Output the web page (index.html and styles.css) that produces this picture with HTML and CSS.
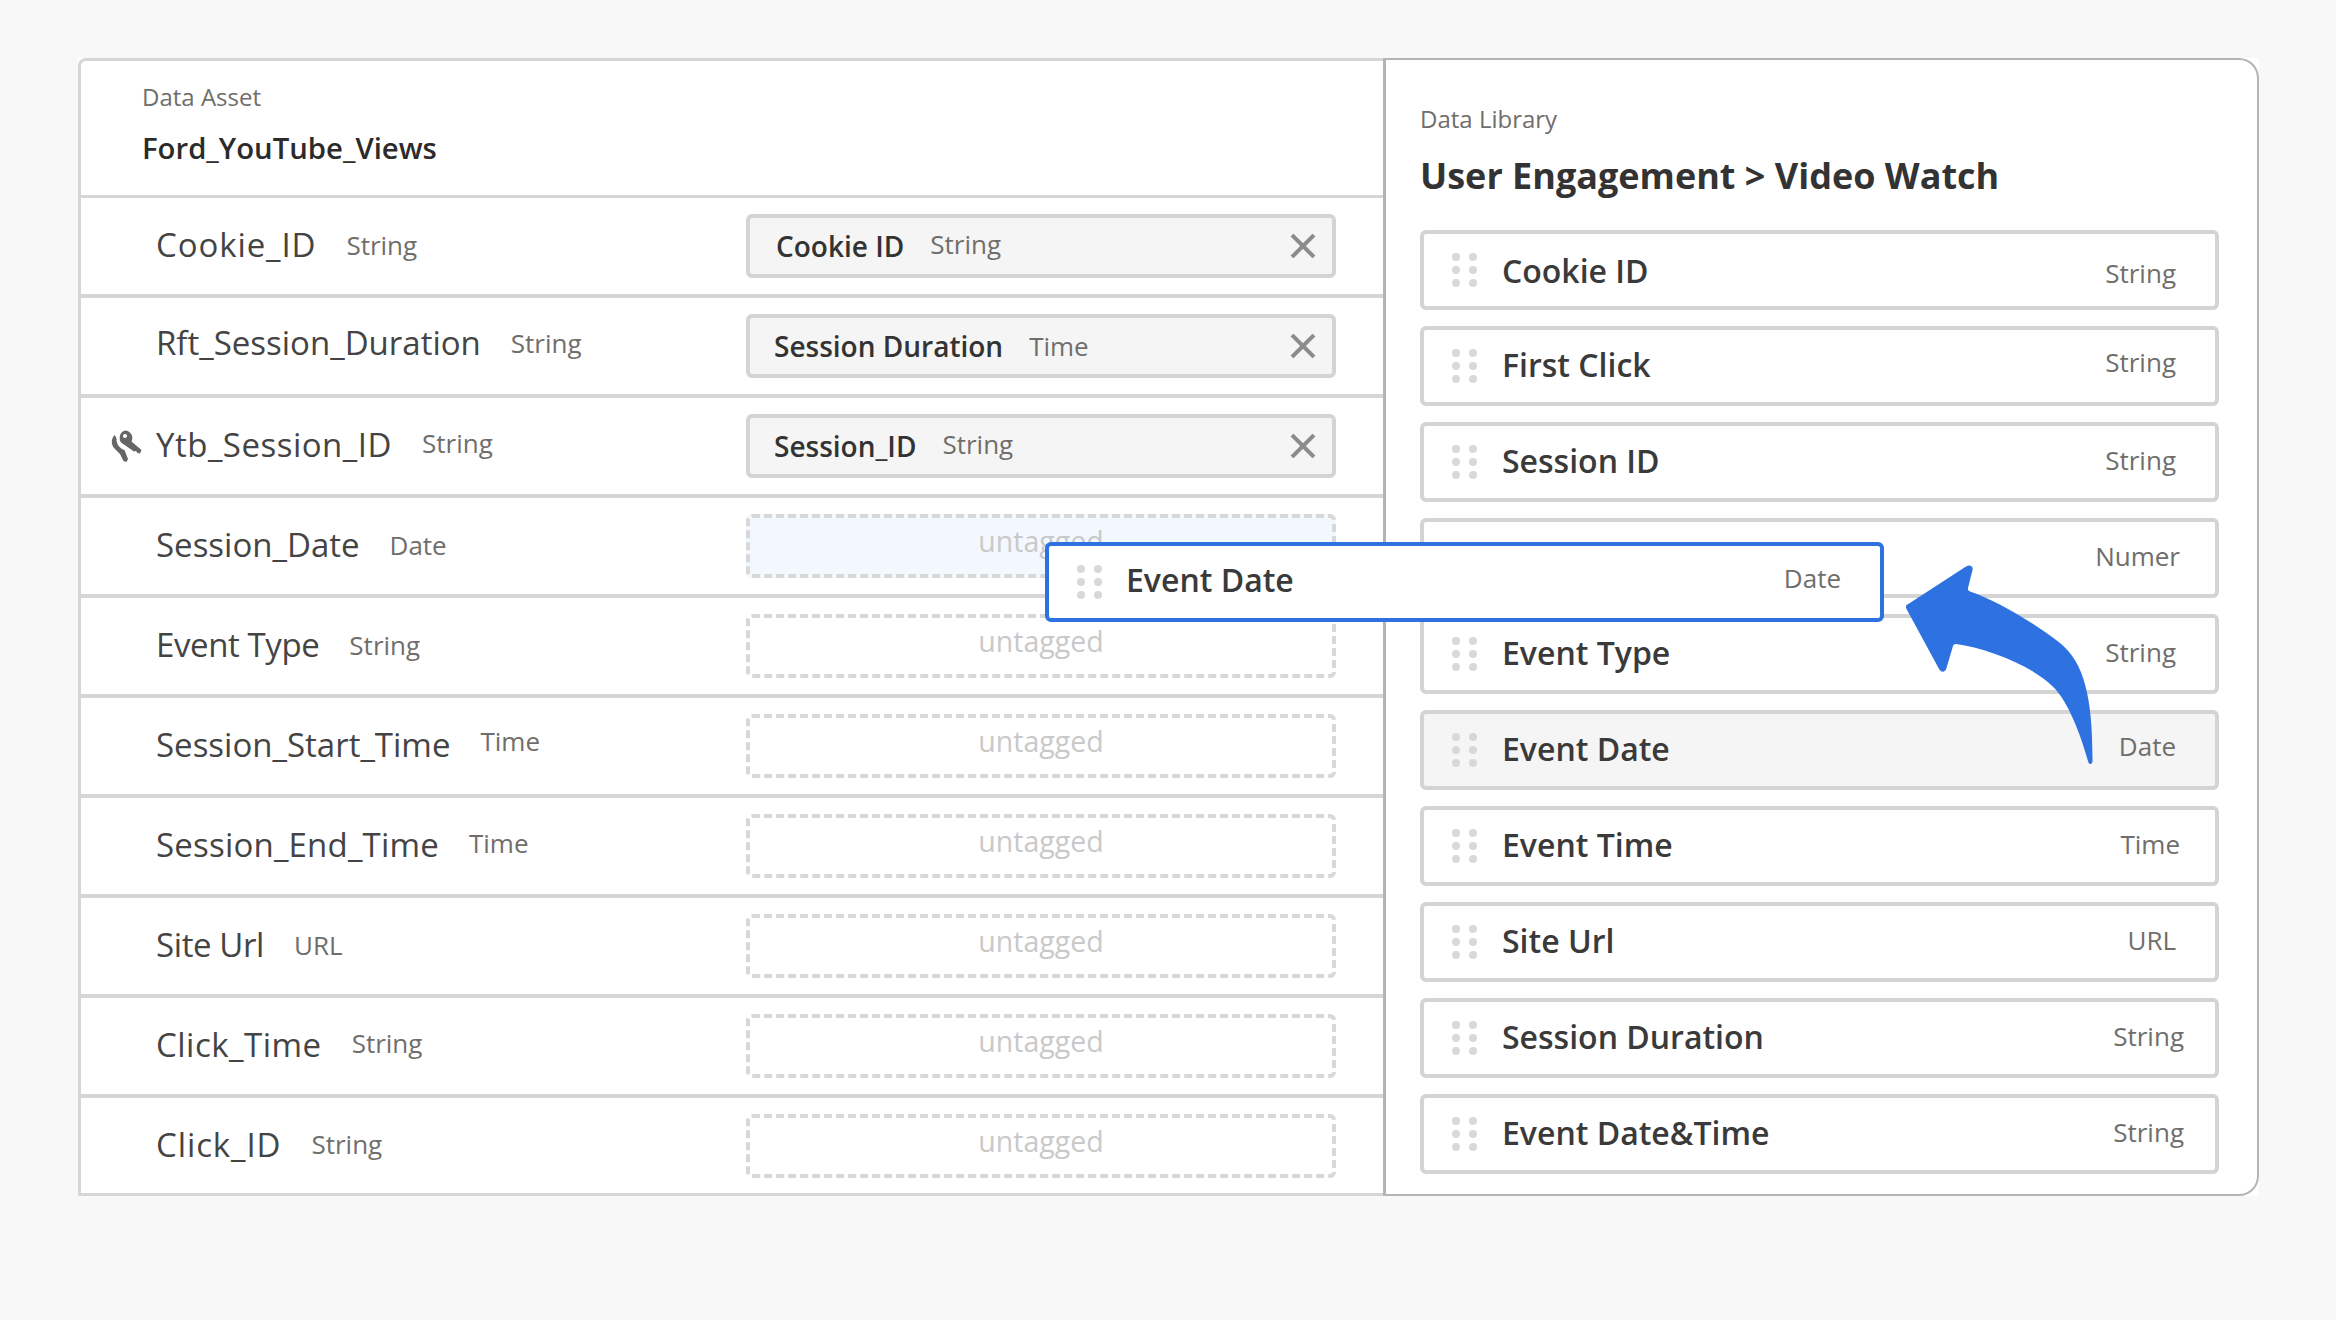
FILE: index.html
```html
<!DOCTYPE html>
<html lang="en">
  <head>
    <meta charset="UTF-8" />
    <title>Data Asset Tagging</title>
    <link rel="stylesheet" href="styles.css">
  </head>
  <body>
    <div class="board">
      <section class="asset">
        <header class="asset-head">
          <div class="eyebrow">Data Asset</div>
          <div class="asset-name">Ford_YouTube_Views</div>
        </header>

        <div class="row">
          <span class="key-slot"></span><span class="field field-wider">Cookie_ID</span><span class="type">String</span>
          <div class="chip"><b class="chip-name chip-name-in">Cookie ID</b><span class="type chip-type nudge-up">String</span>
            <svg class="close" viewBox="0 0 26 24"><path d="M2 1 L24 23 M24 1 L2 23" /></svg>
          </div>
        </div>
        <div class="row">
          <span class="key-slot"></span><span class="field nudge-up">Rft_Session_Duration</span><span class="type nudge-up">String</span>
          <div class="chip"><b class="chip-name">Session Duration</b><span class="type chip-type">Time</span>
            <svg class="close" viewBox="0 0 26 24"><path d="M2 1 L24 23 M24 1 L2 23" /></svg>
          </div>
        </div>
        <div class="row">
          <span class="key-slot">
            <svg class="key" viewBox="0 0 32 32">
              <path d="M14 0.500 a7.500 7.500 0 0 1 6.500 11 L30.500 20 L29 23.500 L26.500 23 L25 21 L23 21.500 L13 14.500 a7.500 7.500 0 0 1 1 -14 Z M14 4 a2 2 0 1 0 0.010 0 Z" fill-rule="evenodd" />
              <path d="M3.500 5 C0 9 0 14 3 18 L9 24 L12.500 31 L15.500 32 L17 29 L13.500 20 C9 19 5 14 5.500 8 Z" />
            </svg>
          </span><span class="field field-wide">Ytb_Session_ID</span><span class="type nudge-up">String</span>
          <div class="chip"><b class="chip-name">Session_ID</b><span class="type chip-type nudge-up">String</span>
            <svg class="close" viewBox="0 0 26 24"><path d="M2 1 L24 23 M24 1 L2 23" /></svg>
          </div>
        </div>
        <div class="row">
          <span class="key-slot"></span><span class="field">Session_Date</span><span class="type">Date</span>
          <div class="slot slot-active">untagged</div>
        </div>
        <div class="row">
          <span class="key-slot"></span><span class="field field-tight">Event Type</span><span class="type">String</span>
          <div class="slot">untagged</div>
        </div>
        <div class="row">
          <span class="key-slot"></span><span class="field">Session_Start_Time</span><span class="type nudge-up-more">Time</span>
          <div class="slot">untagged</div>
        </div>
        <div class="row">
          <span class="key-slot"></span><span class="field field-slight">Session_End_Time</span><span class="type nudge-up">Time</span>
          <div class="slot">untagged</div>
        </div>
        <div class="row">
          <span class="key-slot"></span><span class="field field-tight">Site Url</span><span class="type">URL</span>
          <div class="slot">untagged</div>
        </div>
        <div class="row">
          <span class="key-slot"></span><span class="field field-wide">Click_Time</span><span class="type nudge-up">String</span>
          <div class="slot">untagged</div>
        </div>
        <div class="row row-last">
          <span class="key-slot"></span><span class="field field-wider">Click_ID</span><span class="type">String</span>
          <div class="slot">untagged</div>
        </div>
      </section>

      <section class="library">
        <div class="eyebrow">Data Library</div>
        <h1 class="library-title">User Engagement &gt; Video Watch</h1>
        <div class="items">
          <div class="item"><span class="grip"><i></i><i></i><i></i><i></i><i></i><i></i></span><span class="item-name item-name-low">Cookie ID</span><span class="type nudge-down">String</span></div>
          <div class="item"><span class="grip"><i></i><i></i><i></i><i></i><i></i><i></i></span><span class="item-name">First Click</span><span class="type nudge-up">String</span></div>
          <div class="item"><span class="grip"><i></i><i></i><i></i><i></i><i></i><i></i></span><span class="item-name">Session ID</span><span class="type">String</span></div>
          <!-- name and grip of this one are covered by the drag card -->
          <div class="item"><span class="item-name"></span><span class="type type-wide">Numer</span></div>
          <div class="item"><span class="grip"><i></i><i></i><i></i><i></i><i></i><i></i></span><span class="item-name">Event Type</span><span class="type">String</span></div>
          <div class="item item-used"><span class="grip"><i></i><i></i><i></i><i></i><i></i><i></i></span><span class="item-name">Event Date</span><span class="type nudge-up">Date</span></div>
          <div class="item"><span class="grip"><i></i><i></i><i></i><i></i><i></i><i></i></span><span class="item-name">Event Time</span><span class="type type-wide">Time</span></div>
          <div class="item"><span class="grip"><i></i><i></i><i></i><i></i><i></i><i></i></span><span class="item-name">Site Url</span><span class="type">URL</span></div>
          <div class="item"><span class="grip"><i></i><i></i><i></i><i></i><i></i><i></i></span><span class="item-name">Session Duration</span><span class="type type-far">String</span></div>
          <div class="item"><span class="grip"><i></i><i></i><i></i><i></i><i></i><i></i></span><span class="item-name">Event Date&amp;Time</span><span class="type type-far">String</span></div>
        </div>
      </section>

      <!-- card being dragged, sits on top of both panels -->
      <div class="item drag-card"><span class="grip"><i></i><i></i><i></i><i></i><i></i><i></i></span><span class="item-name">Event Date</span><span class="type">Date</span></div>

      <svg class="arrow" viewBox="0 0 200 210">
        <path d="M6 45.500 L66 6.500 C70 4 73.500 6 72.500 10 L68 28 C67.700 30 68.500 31 70 31.500 C95 40 130 60 160 83 C185 103 192.700 140 192.500 201 C192.500 205 188.500 205 188 201 C178 165 165 138 153 126.700 C130 104 85 88 56 84 C54 84 53 85 52.700 87 L46.500 108 C45 113 41 113 38.500 108 L6 48 Z" />
      </svg>
    </div>
  </body>
</html>
```

FILE: styles.css
```css
body {
  font-family: "Open Sans", Arial, sans-serif;
  background-color: #f8f8f8;
  color: #3e3e3c;
  margin: 0;
  padding: 58px 0 0 78px;
}

.board {
  position: relative;
  display: flex;
  width: 2181px;
  height: 1138px;
  box-sizing: border-box;
  background-color: #fff;
}

/* left panel */
.asset {
  width: 1305px;
  box-sizing: border-box;
  border: solid #d6d6d6;
  border-width: 3px 0 3px 3px;
  border-top-left-radius: 8px;
}

.asset-head {
  height: 137px;
  box-sizing: border-box;
  padding: 20px 0 0 61px;
  border-bottom: 3px solid #d6d6d6;
}

.eyebrow {
  font-size: 24px;
  line-height: 32px;
  color: #706e6b;
}

.asset-name {
  font-size: 29.300px;
  font-weight: 600;
  line-height: 38px;
  margin-top: 16px;
  color: #2b2b2b;
}

.row {
  display: flex;
  align-items: center;
  height: 100px;
  box-sizing: border-box;
  padding: 0 47px 0 30px;
  border-bottom: 4px solid #d6d6d6;
}

.row-last {
  height: 95px;
  border-bottom: 0;
}

.key-slot {
  width: 45px;
  display: flex;
}

.key {
  width: 32px;
  height: 32px;
  fill: #666;
}

.field {
  font-size: 33px;
  margin-bottom: 3px;
  color: #444;
}

.field-slight {
  letter-spacing: 0.2px;
}

.field-wide {
  letter-spacing: 0.5px;
}

.field-wider {
  letter-spacing: 0.9px;
}

.field-tight {
  letter-spacing: -0.4px;
}

.type {
  font-size: 26px;
  color: #706e6b;
}

.row > .type {
  margin-left: 30px;
  margin-right: auto;
  margin-bottom: 3px;
}

/* the source text does not sit on one baseline */
.nudge-up {
  margin-bottom: 5px;
}

.row > .nudge-up {
  margin-bottom: 7px;
}

.row > .nudge-up-more {
  margin-bottom: 11px;
}

.chip,
.slot {
  width: 590px;
  height: 64px;
  box-sizing: border-box;
  border-radius: 6px;
}

.chip {
  display: flex;
  align-items: center;
  padding: 0 16px 0 24px;
  background-color: #f5f5f5;
  border: 4px solid #d4d4d4;
}

.chip-name {
  font-size: 28px;
  font-weight: 600;
  color: #333;
}

.chip-name-in {
  margin-left: 2px;
}

.chip-type {
  margin-left: 26px;
}

.close {
  width: 26px;
  height: 24px;
  margin-left: auto;
  fill: none;
  stroke: #8c8c8c;
  stroke-width: 4;
}

.slot {
  border: 4px dashed #d8d8d8;
  text-align: center;
  font-size: 28.500px;
  line-height: 47px;
  color: #c9c9c9;
}

.slot-active {
  background-color: #f3f8fe;
}

/* right panel */
.library {
  flex: 1;
  box-sizing: border-box;
  padding: 43px 38px 0 34px;
  border: 2px solid #b4b4b4;
  border-left-width: 3px;
  border-radius: 0 20px 20px 0;
}

.library-title {
  font-size: 36px;
  font-weight: 700;
  line-height: 50px;
  margin: 16px 0 29px;
  color: #333;
}

.items {
  display: flex;
  flex-direction: column;
  gap: 16px;
}

.item {
  display: flex;
  align-items: center;
  height: 80px;
  box-sizing: border-box;
  padding: 0 39px 0 28px;
  background-color: #fff;
  border: 4px solid #d4d4d4;
  border-radius: 6px;
}

.item-used {
  background-color: #f5f5f5;
}

.item-name {
  font-size: 32px;
  font-weight: 600;
  margin: 0 auto 3px 25px;
  color: #3a3a3a;
}

.item-name-low {
  margin-bottom: 0;
}

.item .type {
  margin-bottom: 4px;
}

.item .nudge-up {
  margin-bottom: 8px;
}

.item .nudge-down {
  margin-top: 6px;
  margin-bottom: 0;
}

.type-wide {
  margin-right: -4px;
}

.type-far {
  margin-right: -8px;
}

.grip {
  display: grid;
  grid-template-columns: 8px 8px;
  gap: 5px 9px;
}

.grip i {
  width: 8px;
  height: 8px;
  border-radius: 50%;
  background-color: #d8d8d8;
}

.drag-card {
  position: absolute;
  left: 967px;
  top: 484px;
  width: 839px;
  border-color: #2d72e0;
}

.drag-card .item-name {
  margin-left: 24px;
  margin-bottom: 6px;
}

.drag-card .type {
  margin-bottom: 8px;
}

.arrow {
  position: absolute;
  left: 1822px;
  top: 502px;
  width: 200px;
  height: 210px;
  fill: #2d72e0;
}
```
